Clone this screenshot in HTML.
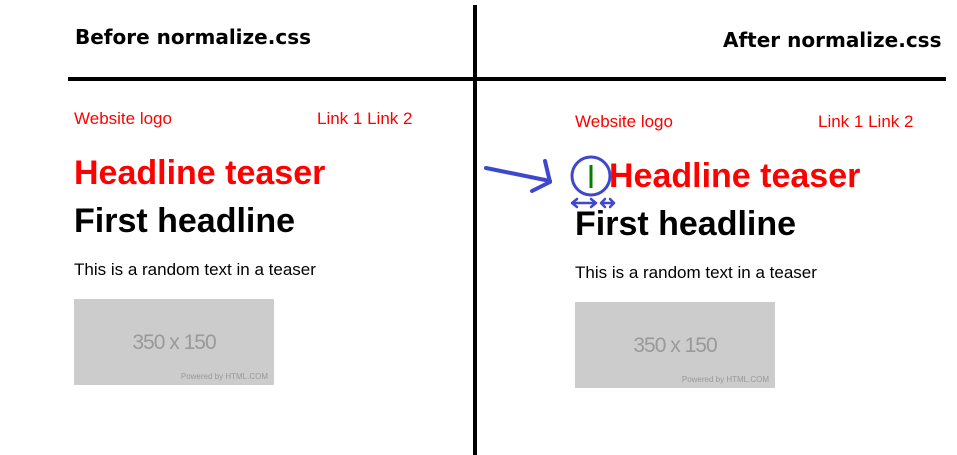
<!DOCTYPE html>
<html><head><meta charset="utf-8"><style>
html,body{margin:0;padding:0;width:957px;height:455px;background:#fff;overflow:hidden;position:relative;font-family:"Liberation Sans",Arial,sans-serif}
.a{position:absolute;white-space:nowrap;line-height:1}
.t{font-family:"DejaVu Sans","Liberation Sans",sans-serif;font-weight:bold;font-size:20px;color:#000}
.r{color:#f00;font-size:17px}
.h1{color:#f00;font-weight:bold;font-size:34px}
.h2{color:#000;font-weight:bold;font-size:34px}
.p{color:#000;font-size:17px}
.img{position:absolute;width:200px;height:86px;background:#ccc}
.img .n{position:absolute;left:0;right:0;top:32px;text-align:center;font-size:21px;color:#999;letter-spacing:-1px}
.img .pw{position:absolute;right:6px;bottom:4px;font-size:8px;color:#999}
</style></head><body>
<div class="a t" style="left:75px;top:27px">Before normalize.css</div>
<div class="a t" style="left:723px;top:30px">After normalize.css</div>
<div style="position:absolute;left:68px;top:77px;width:878px;height:4px;background:#000"></div>
<div style="position:absolute;left:473px;top:5px;width:4px;height:450px;background:#000"></div>

<div class="a r" style="left:74px;top:110px">Website logo</div>
<div class="a r" style="left:317px;top:110px">Link 1 Link 2</div>
<div class="a h1" style="left:74px;top:156px">Headline teaser</div>
<div class="a h2" style="left:74px;top:204px">First headline</div>
<div class="a p" style="left:74px;top:261px">This is a random text in a teaser</div>
<div class="img" style="left:74px;top:299px"><div class="n">350 x 150</div><div class="pw">Powered by HTML.COM</div></div>

<div class="a r" style="left:575px;top:113px">Website logo</div>
<div class="a r" style="left:818px;top:113px">Link 1 Link 2</div>
<div class="a h1" style="left:609px;top:159px">Headline teaser</div>
<div class="a h2" style="left:575px;top:207px">First headline</div>
<div class="a p" style="left:575px;top:264px">This is a random text in a teaser</div>
<div class="img" style="left:575px;top:302px"><div class="n">350 x 150</div><div class="pw">Powered by HTML.COM</div></div>

<svg style="position:absolute;left:0;top:0" width="957" height="455">
<g stroke="#3f48cc" stroke-width="4" fill="none" stroke-linecap="round" stroke-linejoin="round">
<path d="M486 168 L550 181"/>
<path d="M545 161 L550 182 L532 191"/>
<circle cx="591" cy="176" r="19" stroke-width="3"/>
<path d="M572 203 L596 203 M577 199 L572 203 L577 207 M591 199 L596 203 L591 207" stroke-width="2.5"/>
<path d="M601 203 L614 203 M605 199 L601 203 L605 207 M610 199 L614 203 L610 207" stroke-width="2.5"/>
</g>
<line x1="591" y1="165" x2="591" y2="188" stroke="#008000" stroke-width="3"/>
</svg>
</body></html>
